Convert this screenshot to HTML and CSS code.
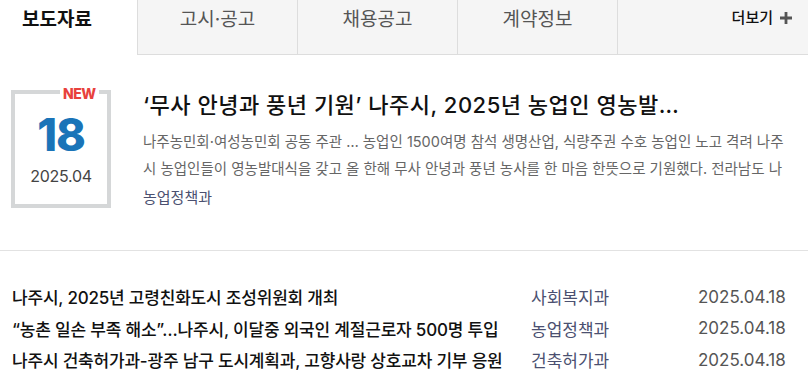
FILE: index.html
```html
<!DOCTYPE html>
<html lang="ko">
<head>
<meta charset="utf-8">
<link rel="stylesheet" href="styles.css">
</head>
<body>
<div class="board">
  <nav class="tabs">
    <a class="tab tab-active">보도자료</a>
    <a class="tab">고시·공고</a>
    <a class="tab">채용공고</a>
    <a class="tab">계약정보</a>
    <div class="tab-more"><a class="more">더보기 <svg class="plus" width="12" height="12" viewBox="0 0 12 12"><path d="M4.6 0h2.8v4.6H12v2.8H7.4V12H4.6V7.4H0V4.6h4.6z" fill="#555"/></svg></a></div>
  </nav>
  <section class="featured">
    <div class="datebox">
      <span class="new">NEW</span>
      <span class="day">18</span>
      <span class="ym">2025.04</span>
    </div>
    <div class="feat-body">
      <h2 class="feat-title">‘무사 안녕과 풍년 기원’ 나주시, 2025년 농업인 영농발…</h2>
      <p class="feat-desc">나주농민회·여성농민회 공동 주관 … 농업인 1500여명 참석 생명산업, 식량주권 수호 농업인 노고 격려 나주시 농업인들이 영농발대식을 갖고 올 한해 무사 안녕과 풍년 농사를 한 마음 한뜻으로 기원했다. 전라남도 나</p>
      <span class="feat-dept">농업정책과</span>
    </div>
  </section>
  <ul class="list">
    <li class="row"><span class="r-title">나주시, 2025년 고령친화도시 조성위원회 개최</span><span class="r-dept">사회복지과</span><span class="r-date">2025.04.18</span></li>
    <li class="row"><span class="r-title">“농촌 일손 부족 해소”…나주시, 이달중 외국인 계절근로자 500명 투입</span><span class="r-dept">농업정책과</span><span class="r-date">2025.04.18</span></li>
    <li class="row"><span class="r-title">나주시 건축허가과-광주 남구 도시계획과, 고향사랑 상호교차 기부 응원</span><span class="r-dept">건축허가과</span><span class="r-date">2025.04.18</span></li>
  </ul>
</div>
</body>
</html>
```
FILE: styles.css
```css
* { box-sizing: border-box; margin: 0; padding: 0; }
html, body { background: #fff; }
body {
  font-family: Inter, "Noto Sans CJK KR", sans-serif;
  color: #111;
  width: 808px;
  height: 383px;
  overflow: hidden;
}
.board { width: 808px; }
.tabs {
  display: flex;
  height: 55px;
}
.tab {
  width: 160px;
  height: 55px;
  background: #f5f5f5;
  border-left: 1px solid #dddddd;
  border-bottom: 1px solid #dddddd;
  font-size: 19px;
  color: #555;
  text-align: center;
  padding-top: 6px;
  line-height: 28px;
  letter-spacing: 0;
}
.tab-active {
  width: 137px;
  background: #fff;
  border-left: 0;
  border-bottom: 1px solid #fff;
  color: #111;
  font-weight: 700;
  padding-right: 23px;
}
.tab-more {
  flex: 1;
  background: #f5f5f5;
  border-left: 1px solid #dddddd;
  border-bottom: 1px solid #dddddd;
  display: flex;
  justify-content: flex-end;
  padding-right: 16px;
  padding-top: 8px;
}
.more {
  font-size: 15px;
  line-height: 20px;
  color: #111;
  font-weight: 500;
  display: flex;
  align-items: center;
  gap: 7px;
  height: 20px;
}
.plus { display: block; }
.featured {
  display: flex;
  padding: 35px 0 0 11px;
  height: 196px;
  border-bottom: 1px solid #e2e2e2;
}
.datebox {
  position: relative;
  width: 100px;
  height: 118px;
  border: 4px solid #d5d7d8;
  display: flex;
  flex-direction: column;
  align-items: center;
  flex-shrink: 0;
}
.new {
  position: absolute;
  top: -7px;
  left: 45px;
  background: #fff;
  padding: 0 3px;
  color: #e8413c;
  font-weight: 800;
  font-size: 14px;
  line-height: 14px;
  letter-spacing: -0.5px;
}
.day {
  margin-top: 19px;
  font-size: 45px;
  line-height: 44px;
  font-weight: 800;
  color: #1a74b8;
  letter-spacing: -1px;
}
.ym {
  margin-top: 9px;
  font-size: 16px;
  line-height: 20px;
  color: #444;
  letter-spacing: -0.3px;
}
.feat-body {
  margin-left: 32px;
  width: 650px;
}
.feat-title {
  font-size: 22px;
  line-height: 30px;
  font-weight: 500;
  color: #111;
  letter-spacing: 0.5px;
  margin-top: 0;
}
.feat-desc {
  margin-top: 8px;
  font-size: 14.5px;
  line-height: 27px;
  color: #666;
  letter-spacing: 0;
  width: 643px;
}
.feat-dept {
  display: block;
  margin-top: 2px;
  font-size: 15px;
  line-height: 27px;
  color: #4b5070;
}
.list {
  list-style: none;
  padding-top: 30px;
}
.row {
  display: flex;
  height: 31.5px;
  align-items: center;
  font-size: 17px;
}
.r-title {
  width: 531px;
  padding-left: 12px;
  color: #111;
  font-weight: 500;
  letter-spacing: -0.2px;
}
.r-dept {
  width: 167px;
  color: #4b5070;
}
.r-date {
  color: #555;
}
```
